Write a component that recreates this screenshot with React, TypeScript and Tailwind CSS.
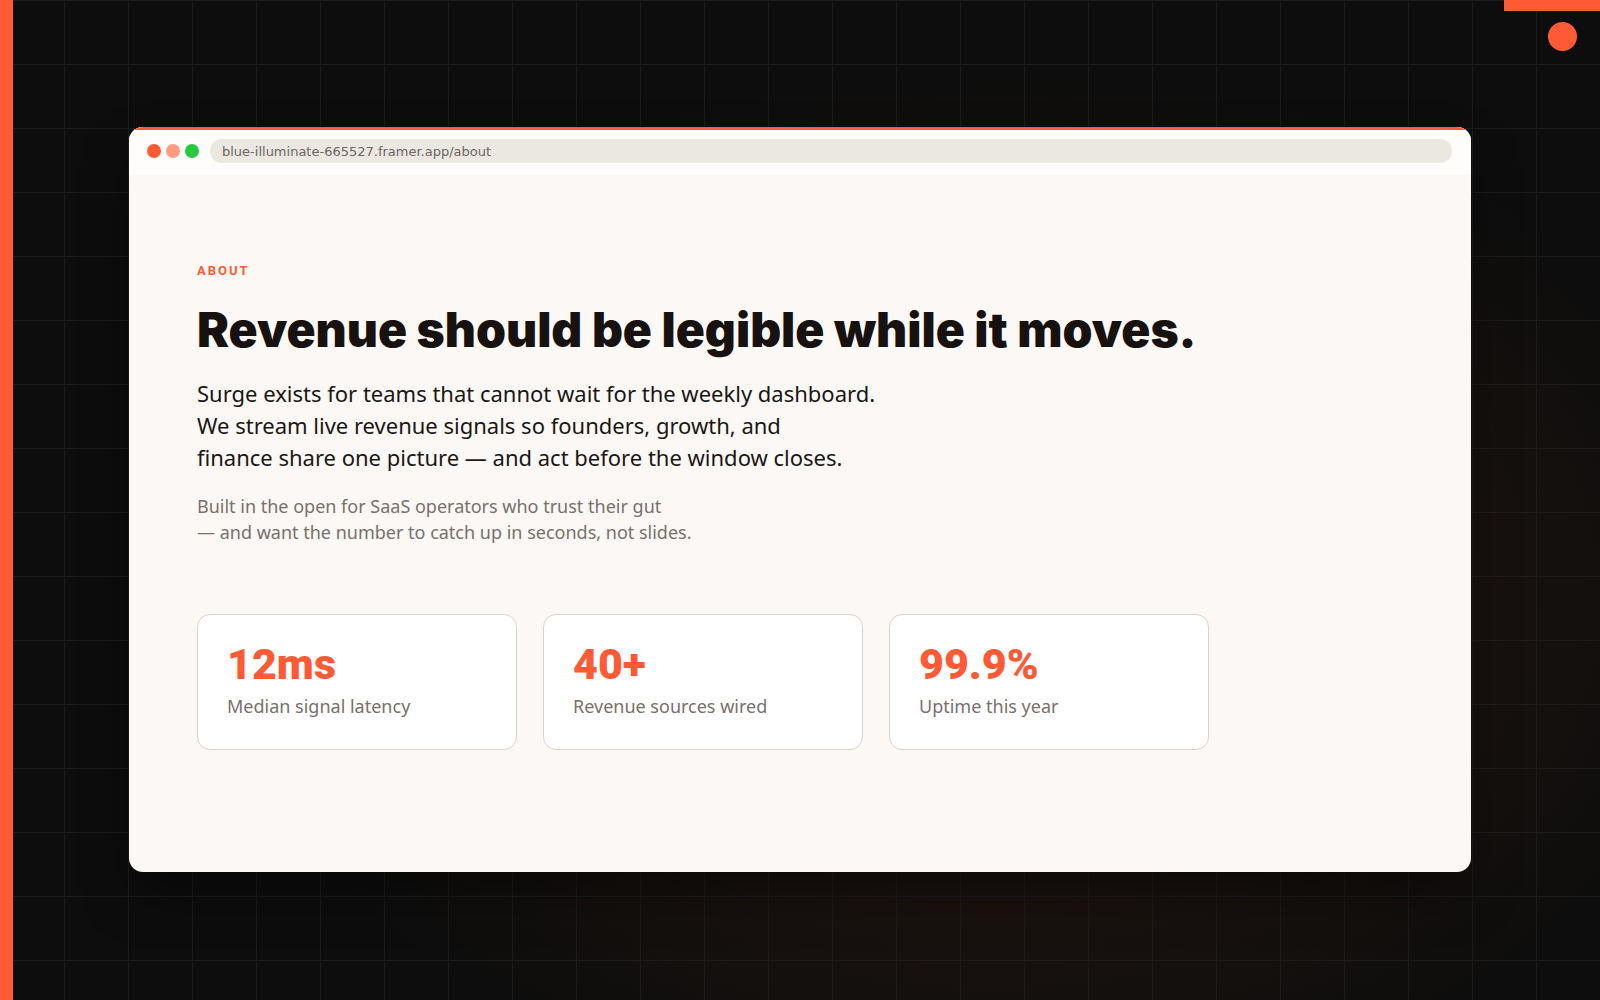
const stats = [
  { value: "12ms", label: "Median signal latency" },
  { value: "40+", label: "Revenue sources wired" },
  { value: "99.9%", label: "Uptime this year" },
];

function BrowserBar() {
  return (
    <header className="flex items-center gap-[11px] h-12 pl-[18px] pr-[19px] border-t-[3px] border-[#ff5a36] pb-[2px] bg-[#fefdfb]">
      <div className="flex gap-[5px]">
        <span className="size-[14px] rounded-full bg-[#ff5a36]" />
        <span className="size-[14px] rounded-full bg-[#ff9b80]" />
        <span className="size-[14px] rounded-full bg-[#28c840]" />
      </div>
      <input
        type="text"
        aria-label="Address"
        readOnly
        defaultValue="blue-illuminate-665527.framer.app/about"
        className="flex-1 min-w-0 h-6 px-3 rounded-full bg-[#ebe8e2] text-[13px] text-[#6b665f] font-['DejaVu_Sans',sans-serif] outline-none"
      />
    </header>
  );
}

function StatCard({ value, label }: { value: string; label: string }) {
  return (
    <div className="flex flex-col h-[136px] px-[29px] pt-[23px] rounded-[13px] border border-[#d9d4cc] bg-white">
      <dd className="order-first text-[43px] leading-[52px] font-black text-[#ff5a36] font-[Roboto,sans-serif]">
        {value}
      </dd>
      <dt className="text-lg leading-8 text-[#78716c]">{label}</dt>
    </div>
  );
}

export default function App() {
  return (
    <div className="relative flex flex-col justify-center min-h-screen px-[129px] pb-[2px] bg-[#0d0d0d] bg-[linear-gradient(#1c1c1c_1px,transparent_1px),linear-gradient(90deg,#1c1c1c_1px,transparent_1px),radial-gradient(48%_54%_at_62%_60%,rgba(230,110,50,0.12),transparent)] bg-[size:64px_64px,64px_64px,100%_100%] font-['Noto_Sans',sans-serif]">
      <div className="absolute inset-y-0 left-0 w-[13px] bg-[#ff5a36]" />
      <div className="absolute top-0 right-0 w-24 h-[11px] bg-[#ff5a36]" />
      <div className="absolute top-[22px] right-[23px] size-[29px] rounded-full bg-[#ff5a36]" />

      <div className="overflow-hidden rounded-[14px] bg-[#fcf8f5] shadow-[0_26px_52px_-10px_rgba(0,0,0,0.5)]">
        <BrowserBar />
        <main className="px-[68px] pt-[84px] pb-[122px]">
          <p className="text-[13px] leading-6 font-bold tracking-[2px] text-[#ff5a36] font-[Roboto,sans-serif]">
            ABOUT
          </p>
          <h1 className="mt-4 text-[48px] leading-[62px] font-black text-[#171210] font-[Inter,sans-serif]">
            Revenue should be legible while it moves.
          </h1>
          <p className="mt-4 text-[22px] leading-8 text-[#1a1716]">
            Surge exists for teams that cannot wait for the weekly dashboard.
            <br />
            We stream live revenue signals so founders, growth, and
            <br />
            finance share one picture — and act before the window closes.
          </p>
          <p className="mt-5 text-lg leading-[26px] text-[#78716c]">
            Built in the open for SaaS operators who trust their gut
            <br />— and want the number to catch up in seconds, not slides.
          </p>
          <dl className="grid grid-cols-3 gap-[26px] max-w-[1012px] mt-[69px]">
            {stats.map((s) => (
              <StatCard key={s.label} value={s.value} label={s.label} />
            ))}
          </dl>
        </main>
      </div>
    </div>
  );
}
